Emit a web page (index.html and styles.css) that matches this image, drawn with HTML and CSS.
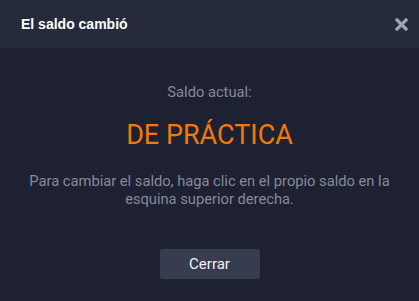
FILE: index.html
```html
<!DOCTYPE html>
<html lang="es">
<head>
<meta charset="utf-8">
<link rel="stylesheet" href="styles.css">
</head>
<body>
<div class="dialog">
  <div class="header">
    <span class="title">El saldo cambió</span>
    <span class="close">
      <svg width="13" height="13" viewBox="0 0 13 13"><path d="M2 2L11 11M11 2L2 11" stroke="#9ea3ae" stroke-width="3.2" stroke-linecap="square"/></svg>
    </span>
  </div>
  <div class="content">
    <div class="label">Saldo actual:</div>
    <div class="value">DE PRÁCTICA</div>
    <p class="info">Para cambiar el saldo, haga clic en el propio saldo en la esquina superior derecha.</p>
    <button class="btn">Cerrar</button>
  </div>
</div>
</body>
</html>
```
FILE: styles.css
```css
html, body {
  margin: 0;
  padding: 0;
  background: #1e2132;
}
.dialog {
  width: 419px;
  height: 301px;
  display: flex;
  flex-direction: column;
  background: #1e2132;
}
.header {
  height: 48px;
  background: #262b3c;
  display: flex;
  align-items: center;
  justify-content: space-between;
  padding: 0 11px 0 21px;
  box-sizing: border-box;
}
.title {
  font-family: "Liberation Sans", Arial, sans-serif;
  font-weight: bold;
  font-size: 14px;
  color: #ffffff;
}
.close {
  display: flex;
  width: 13px;
  height: 13px;
}
.content {
  display: flex;
  flex-direction: column;
  align-items: center;
  font-family: Roboto, sans-serif;
  padding-top: 35px;
}
.label {
  font-size: 14.7px;
  line-height: 18px;
  color: #868a97;
}
.value {
  margin-top: 18px;
  font-size: 27px;
  line-height: 32px;
  color: #f07a0a;
}
.info {
  margin: 21px 0 0;
  font-size: 14.7px;
  line-height: 18px;
  color: #868a97;
  text-align: center;
  padding: 0 20px;
}
.btn {
  margin-top: 41px;
  width: 100px;
  height: 30px;
  border: none;
  border-radius: 3px;
  background: #373c50;
  color: #f2f2f5;
  font-family: Roboto, sans-serif;
  font-size: 15px;
  padding: 0;
}
```
